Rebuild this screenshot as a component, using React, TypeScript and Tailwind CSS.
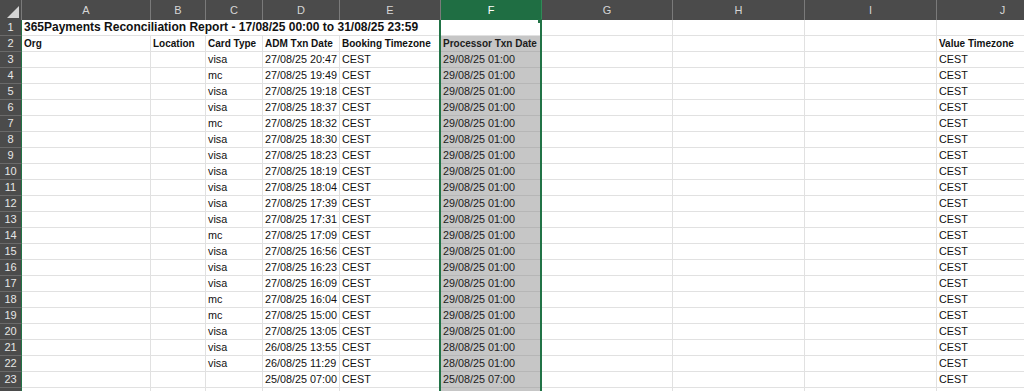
import clsx from 'clsx';

// column widths include the 1px right gridline
const cols = [
  { key: 'A', w: 'w-[129px]' },
  { key: 'B', w: 'w-[55px]' },
  { key: 'C', w: 'w-[57px]' },
  { key: 'D', w: 'w-[77px]' },
  { key: 'E', w: 'w-[101px]' },
  { key: 'F', w: 'w-[101px]' },
  { key: 'G', w: 'w-[131px]' },
  { key: 'H', w: 'w-[132px]' },
  { key: 'I', w: 'w-[132px]' },
  { key: 'J', w: 'w-[132px]' },
];

// [card type, adm txn date, processor txn date]
const txns: [string, string, string][] = [
  ['visa', '27/08/25 20:47', '29/08/25 01:00'],
  ['mc', '27/08/25 19:49', '29/08/25 01:00'],
  ['visa', '27/08/25 19:18', '29/08/25 01:00'],
  ['visa', '27/08/25 18:37', '29/08/25 01:00'],
  ['mc', '27/08/25 18:32', '29/08/25 01:00'],
  ['visa', '27/08/25 18:30', '29/08/25 01:00'],
  ['visa', '27/08/25 18:23', '29/08/25 01:00'],
  ['visa', '27/08/25 18:19', '29/08/25 01:00'],
  ['visa', '27/08/25 18:04', '29/08/25 01:00'],
  ['visa', '27/08/25 17:39', '29/08/25 01:00'],
  ['visa', '27/08/25 17:31', '29/08/25 01:00'],
  ['mc', '27/08/25 17:09', '29/08/25 01:00'],
  ['visa', '27/08/25 16:56', '29/08/25 01:00'],
  ['visa', '27/08/25 16:23', '29/08/25 01:00'],
  ['visa', '27/08/25 16:09', '29/08/25 01:00'],
  ['mc', '27/08/25 16:04', '29/08/25 01:00'],
  ['mc', '27/08/25 15:00', '29/08/25 01:00'],
  ['visa', '27/08/25 13:05', '29/08/25 01:00'],
  ['visa', '26/08/25 13:55', '28/08/25 01:00'],
  ['visa', '26/08/25 11:29', '28/08/25 01:00'],
  ['', '25/08/25 07:00', '25/08/25 07:00'],
  ['visa', '26/08/25 17:43', '28/08/25 01:00'],
];

type RowData = Record<string, string>;

const rows: RowData[] = [
  { A: 'Org', B: 'Location', C: 'Card Type', D: 'ADM Txn Date', E: 'Booking Timezone', F: 'Processor Txn Date', J: 'Value Timezone' },
  ...txns.map(([card, adm, proc]) => ({ C: card, D: adm, E: 'CEST', F: proc, J: 'CEST' })),
];

function RowHead({ n }: { n: number }) {
  return (
    <div className="h-4 w-[22px] shrink-0 border-b border-r border-b-[#6a6a6a] border-r-[#217346] bg-[#4b4b4b] text-center text-[11px] leading-[15px] text-[#e6e6e6]">
      {n}
    </div>
  );
}

function Cell({ w, sel, bold, children }: { w: string; sel?: boolean; bold?: boolean; children?: React.ReactNode }) {
  return (
    <div
      className={clsx(
        'h-4 shrink-0 overflow-hidden whitespace-nowrap border-b border-r px-[2px] leading-[15px]',
        w,
        sel ? 'border-[#b6b6b6] bg-[#c6c6c6] text-[#1c1c1c]' : 'border-[#e1e1e1] text-[#111]',
        bold ? 'text-[10px] font-bold' : 'text-[10.8px]'
      )}
    >
      {children}
    </div>
  );
}

export default function App() {
  return (
    <div className="relative h-[391px] w-[1024px] overflow-hidden bg-white font-['Liberation_Sans',Arial,sans-serif]">
      {/* column letters */}
      <div className="flex h-5 bg-[#4b4b4b]">
        <div className="relative h-5 w-[22px] shrink-0 border-r border-[#7a7a7a]">
          <div className="absolute bottom-[2px] right-[2px] h-0 w-0 border-b-[12px] border-l-[12px] border-b-[#d4d4d4] border-l-transparent" />
        </div>
        {cols.map((c) => (
          <div
            key={c.key}
            className={clsx(
              'h-5 shrink-0 border-r text-center text-[11px] leading-5',
              c.w,
              c.key === 'F'
                ? 'border-[#2f8a57] bg-[#1f6e43] text-white'
                : 'border-[#7a7a7a] text-[#d6d6d6]'
            )}
          >
            {c.key}
          </div>
        ))}
      </div>

      {/* row 1: report title overflowing A..E */}
      <div className="flex">
        <RowHead n={1} />
        <div className="h-4 w-[129px] shrink-0 overflow-visible whitespace-nowrap border-b border-[#e1e1e1] px-[2px] text-[12px] font-bold leading-[15px] text-[#111]">
          365Payments Reconciliation Report - 17/08/25 00:00 to 31/08/25 23:59
        </div>
        <div className="h-4 w-[55px] shrink-0 border-b border-[#e1e1e1]" />
        <div className="h-4 w-[57px] shrink-0 border-b border-[#e1e1e1]" />
        <div className="h-4 w-[77px] shrink-0 border-b border-[#e1e1e1]" />
        <Cell w="w-[101px]" />
        {cols.slice(5).map((c) => (
          <Cell key={c.key} w={c.w} />
        ))}
      </div>

      {rows.map((r, i) => (
        <div key={i} className="flex">
          <RowHead n={i + 2} />
          {cols.map((c) => (
            <Cell key={c.key} w={c.w} sel={c.key === 'F'} bold={i === 0}>
              {r[c.key]}
            </Cell>
          ))}
        </div>
      ))}

      {/* selected column outline */}
      <div className="pointer-events-none absolute bottom-0 left-[439px] top-5 w-[103px] border-x-2 border-[#217346]" />
      <div className="pointer-events-none absolute left-[538px] top-[19px] h-[4px] w-[4px] bg-[#217346]" />
    </div>
  );
}
